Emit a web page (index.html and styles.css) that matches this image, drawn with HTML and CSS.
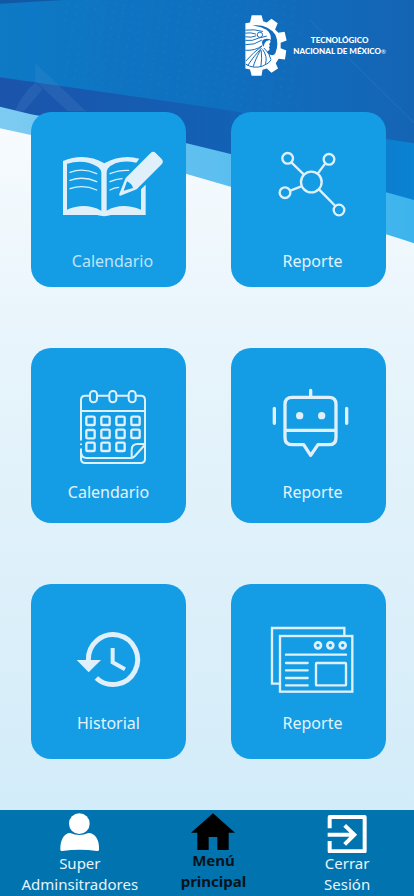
FILE: index.html
```html
<!DOCTYPE html>
<html lang="es">
<head>
<meta charset="utf-8">
<meta name="viewport" content="width=device-width, initial-scale=1">
<title>Menú principal</title>
<link rel="stylesheet" href="styles.css">
</head>
<body>
<div class="page">
  <svg class="backdrop" viewBox="0 0 1242 2688" preserveAspectRatio="xMidYMin slice" aria-hidden="true">
    <defs>
      <linearGradient id="paper" x1="0" y1="0" x2="0" y2="1">
        <stop offset="0.14" stop-color="#f7fbfe"/>
        <stop offset="0.4" stop-color="#e7f4fb"/>
        <stop offset="0.9" stop-color="#d3ecf9"/>
      </linearGradient>
      <linearGradient id="sky" x1="0" y1="0" x2="1" y2="0">
        <stop offset="0" stop-color="#0d7ac6"/>
        <stop offset="0.5" stop-color="#0f70c0"/>
        <stop offset="1" stop-color="#1564b4"/>
      </linearGradient>
      <linearGradient id="band" x1="0" y1="0" x2="1" y2="0">
        <stop offset="0" stop-color="#1b54ab"/>
        <stop offset="0.55" stop-color="#1261b5"/>
        <stop offset="1" stop-color="#0a83d3"/>
      </linearGradient>
      <linearGradient id="ribbon" x1="0" y1="0" x2="1" y2="0">
        <stop offset="0" stop-color="#7dcbf2"/>
        <stop offset="1" stop-color="#3db4ed"/>
      </linearGradient>
      <pattern id="dots" width="28" height="24" patternUnits="userSpaceOnUse" patternTransform="rotate(9)">
        <circle cx="6" cy="6" r="2" fill="#3b93d6" opacity="0.3"/>
      </pattern>
    </defs>
    <rect width="1242" height="2688" fill="url(#paper)"/>
    <path d="M0 300L1242 560V730Q1200 716 1158 703L692 560L560 522L93 405L0 385Z" fill="url(#ribbon)"/>
    <path d="M0 200H1242V600L1158 577L692 462L560 430L93 343L0 320Z" fill="url(#band)"/>
    <path d="M0 0H1242V430L1158 417L700 333L560 312L0 232Z" fill="url(#sky)"/>
    <path d="M190 0H900V330H700L190 250Z" fill="url(#dots)"/>
    <path d="M0 0H190L0 11Z" fill="#1158a5"/>
    <path d="M106 190L258 334H204L106 244ZM106 247L128 268L72 334H45Q60 290 106 247Z" fill="#6a9bd6" opacity="0.16"/>
    <path d="M930 60L1242 368" stroke="#3c8bd0" stroke-width="4" opacity="0.2"/>
  </svg>

  <header class="header">
    <svg class="gear" viewBox="732 44 127 185" aria-hidden="true">
      <path fill="#fff" d="M733 69L747 67L752 45H782L787 63L798 67L812 55L831 69L823 88L833 98L852 95L858 121L840 128V145L857 152L853 179L834 177L825 190L832 206L812 219L798 206L785 210L782 228H752L747 209L733 206Z"/>
      <g fill="#126bbb">
        <path d="M753 76Q800 70 824 104Q836 130 824 160Q818 170 806 164Q796 160 801 153Q810 150 804 142Q809 138 805 132Q812 126 807 120L797 123Q789 129 788 140Q780 128 786 120Q797 113 810 119Q812 101 797 89Q780 79 753 76Z"/>
        <path d="M815 119L821 131L814 140L806 133Z"/>
      </g>
      <g fill="none" stroke="#126bbb" stroke-width="3">
        <path d="M733 90Q760 86 786 94M733 99Q750 96 765 102M733 110Q751 114 766 107M733 121Q756 124 773 114L798 108M733 134Q761 136 783 120"/>
        <circle cx="777" cy="104" r="8"/>
        <path d="M733 151Q762 153 784 137M784 138Q760 154 734 184M782 144Q756 172 740 197M779 150Q760 185 757 201M781 151Q784 178 780 200M785 148Q801 170 794 192M789 144Q808 160 810 179M734 193Q757 208 785 199Q807 190 811 180"/>
      </g>
    </svg>
    <p class="brand">TECNOLÓGICO<br>NACIONAL DE MÉXICO<span class="mark">®</span></p>
  </header>

  <main class="menu">
    <a class="card card--first card--far" href="#">
      <svg class="card__icon" viewBox="63 96 345 270" aria-hidden="true">
        <path fill="#dff0fb" fill-rule="evenodd" d="M99 153Q164 126 223 160Q275 132 328 146L319 158Q260 146 233 176Q230 182 230 190V302Q275 276 333 299V238L347 224V315H243Q223 322 201 315H99ZM111 161V299Q165 276 214 302V188Q213 178 204 171Q164 145 111 161Z"/>
        <g fill="none" stroke="#dff0fb" stroke-width="4" stroke-linecap="round">
          <path d="M120 187Q160 172 200 191M120 211Q160 197 200 215M120 236Q160 222 200 240M240 191Q266 180 296 181M240 215Q257 207 276 206M240 240Q253 233 266 232"/>
        </g>
        <path fill="#dff0fb" fill-rule="evenodd" d="M287 204L362 129Q369 122 377 129L395 147Q402 155 395 163L320 238L271 257Q266 258 268 251ZM291 214L281 242L309 234Q307 222 291 214Z"/>
      </svg>
      <span class="card__label">Calendario</span>
    </a>

    <a class="card card--first card--near" href="#">
      <svg class="card__icon" viewBox="69 96 345 270" aria-hidden="true">
        <g fill="none" stroke="#dff0fb" stroke-width="7">
          <circle cx="250" cy="216" r="31"/>
          <circle cx="179" cy="145" r="16"/>
          <circle cx="303" cy="148" r="16"/>
          <circle cx="171" cy="248" r="16"/>
          <circle cx="333" cy="300" r="16"/>
          <path d="M190 157L228 194M292 160L269 191M187 242L220 229M273 238L322 288"/>
        </g>
      </svg>
      <span class="card__label">Reporte</span>
    </a>

    <a class="card card--second" href="#">
      <svg class="card__icon" viewBox="63 99 345 270" aria-hidden="true">
        <g fill="none" stroke="#dff0fb" stroke-width="6" stroke-linecap="round">
          <path d="M180 152H166Q153 152 153 165V284M204 152H236M261 152H294M319 152H332Q345 152 345 165V342Q345 354 332 354H166Q153 354 153 342V313M153 298V298M154 198H344M154 326Q156 339 169 339H303Q309 339 315 333L344 300M344 297H323Q305 297 305 315V336"/>
          <rect x="180" y="138" width="21" height="34" rx="10"/>
          <rect x="238" y="138" width="21" height="34" rx="10"/>
          <rect x="296" y="138" width="21" height="34" rx="10"/>
        </g>
        <g fill="none" stroke="#dff0fb" stroke-width="7">
          <rect x="169" y="215" width="25" height="25" rx="4"/>
          <rect x="214" y="215" width="25" height="25" rx="4"/>
          <rect x="259" y="215" width="25" height="25" rx="4"/>
          <rect x="304" y="215" width="25" height="25" rx="4"/>
          <rect x="169" y="255" width="25" height="25" rx="4"/>
          <rect x="214" y="254" width="25" height="25" rx="4"/>
          <rect x="259" y="254" width="25" height="25" rx="4"/>
          <rect x="304" y="254" width="25" height="25" rx="4"/>
          <rect x="169" y="293" width="25" height="25" rx="4"/>
          <rect x="214" y="293" width="25" height="25" rx="4"/>
          <rect x="259" y="293" width="25" height="25" rx="4"/>
        </g>
      </svg>
      <span class="card__label">Calendario</span>
    </a>

    <a class="card card--second card--near" href="#">
      <svg class="card__icon" viewBox="69 99 345 270" aria-hidden="true">
        <g fill="none" stroke="#dff0fb" stroke-width="10" stroke-linecap="round" stroke-linejoin="round">
          <path d="M193 157H303Q324 157 324 178V278Q324 299 303 299H270L248 331L227 299H193Q171 299 171 278V178Q171 157 193 157ZM172 256H323M248 136V154M139 190V235M356 190V235"/>
        </g>
        <circle cx="215" cy="212" r="11" fill="#dff0fb"/>
        <circle cx="281" cy="212" r="11" fill="#dff0fb"/>
      </svg>
      <span class="card__label">Reporte</span>
    </a>

    <a class="card" href="#">
      <svg class="card__icon" viewBox="63 102 345 270" aria-hidden="true">
        <path fill="none" stroke="#dff0fb" stroke-width="15" d="M175 242A74 75 0 1 1 199 294"/>
        <path fill="#dff0fb" d="M140 240H213L176 277Z"/>
        <path fill="none" stroke="#dff0fb" stroke-width="12" d="M248 204V247L285 268"/>
      </svg>
      <span class="card__label">Historial</span>
    </a>

    <a class="card card--near" href="#">
      <svg class="card__icon" viewBox="69 102 345 270" aria-hidden="true">
        <g fill="none" stroke="#dff0fb" stroke-width="7">
          <path d="M349 166V144H132V311H154"/>
          <rect x="156" y="168" width="217" height="167"/>
          <rect x="264" y="249" width="90" height="67" rx="2"/>
          <path stroke-linecap="round" d="M174 224H354M174 249H239M174 271H239M174 294H239M174 316H239"/>
        </g>
        <g fill="none" stroke="#dff0fb" stroke-width="8">
          <circle cx="270" cy="196" r="9"/>
          <circle cx="307" cy="196" r="9"/>
          <circle cx="344" cy="196" r="9"/>
        </g>
      </svg>
      <span class="card__label">Reporte</span>
    </a>
  </main>

  <nav class="tabs">
    <a class="tab" href="#">
      <svg class="tab__icon" viewBox="180 39 120 120" aria-hidden="true">
        <circle cx="238" cy="71" r="31" fill="#fff"/>
        <path fill="#fff" d="M211 99Q238 111 265 99C288 99 299 123 297 150Q296 154 291 153Q239 146 187 153Q182 154 181 150C180 123 190 99 211 99Z"/>
      </svg>
      <span>Super<br>Adminsitradores</span>
    </a>
    <a class="tab tab--current" href="#" aria-current="page">
      <svg class="tab__icon tab__icon--home" viewBox="-36 39 132 111" aria-hidden="true">
        <path d="M30 40L96 98H77V150H43V111H17V150H-17V98H-36Z"/>
      </svg>
      <span>Menú<br>principal</span>
    </a>
    <a class="tab" href="#">
      <svg class="tab__icon" viewBox="376 39 120 120" aria-hidden="true">
        <g fill="none" stroke="#fff" stroke-width="12">
          <path stroke-linejoin="round" d="M384 85V51H489V154H384V123"/>
          <path d="M378 104H459M429 76L458 104L429 133"/>
        </g>
      </svg>
      <span>Cerrar<br>Sesión</span>
    </a>
  </nav>
</div>
</body>
</html>
```
FILE: styles.css
```css
* {
  box-sizing: border-box;
}

body {
  margin: 0;
  font-family: "Noto Sans", sans-serif;
  font-size: 16px;
}

a {
  color: inherit;
  text-decoration: none;
}

.page {
  position: relative;
  display: flex;
  flex-direction: column;
  min-height: 100vh;
  overflow: hidden;
}

.backdrop {
  position: absolute;
  inset: 0;
  z-index: -1;
  width: 100%;
  height: 100%;
}

.header {
  display: flex;
  justify-content: flex-end;
  align-items: center;
  gap: 6px;
  padding: 15px 28px 36px;
}

.gear {
  width: 42px;
  height: 61px;
}

.brand {
  margin: 0;
  color: #fff;
  font-family: Lato, sans-serif;
  font-size: 8px;
  font-weight: 900;
  line-height: 11px;
  text-align: center;
}

.mark {
  font-size: 6px;
  font-weight: 400;
}

.menu {
  flex: 1;
  display: grid;
  grid-template-columns: 1fr 1fr;
  align-content: start;
  gap: 61px 45px;
  padding: 0 28px 50px 31px;
}

.card {
  display: flex;
  flex-direction: column;
  align-items: center;
  gap: 7px;
  min-height: 175px;
  padding-top: 30px;
  border-radius: 20px;
  background: #149de5;
  color: #e4f3fc;
}

.card--first {
  gap: 17px;
}

.card--second {
  gap: 12px;
}

.card__icon {
  width: 115px;
  height: 90px;
}

.card__label {
  line-height: 24px;
}

.card--near .card__label {
  padding-left: 8px;
}

.card--far .card__label {
  padding-left: 8px;
  color: #bfe3f8;
}

.tabs {
  display: grid;
  grid-template-columns: repeat(3, 1fr);
  min-height: 86px;
  padding: 3px 0 0 13px;
  background: #0173ae;
  color: #e8f4fb;
  font-size: 15px;
  line-height: 21px;
  text-align: center;
}

.tab {
  display: flex;
  flex-direction: column;
  align-items: center;
}

.tab--current {
  color: #06131c;
  font-weight: 700;
}

.tab__icon {
  width: 40px;
  height: 40px;
}

.tab__icon--home {
  width: 44px;
  height: 37px;
}
```
